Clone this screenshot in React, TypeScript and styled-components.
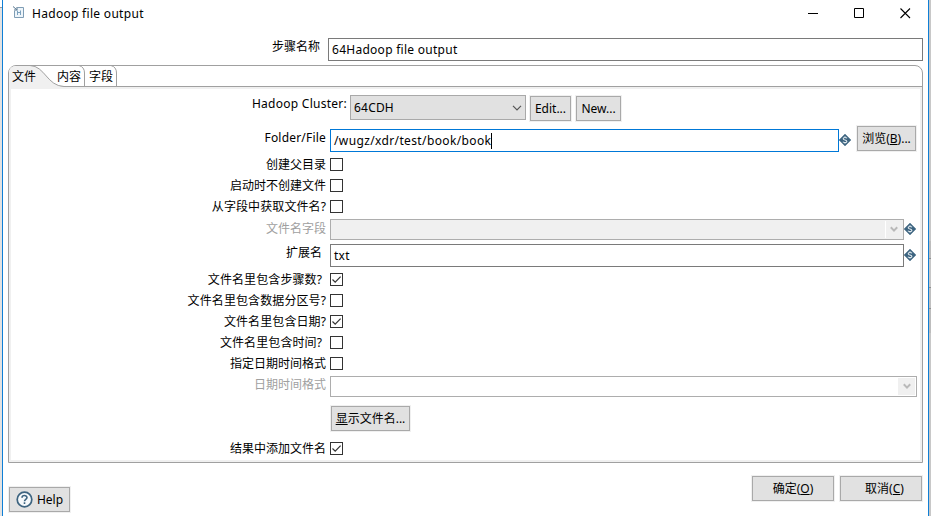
import React from "react";
import styled, { createGlobalStyle, css } from "styled-components";

const GlobalStyle = createGlobalStyle`
  * { box-sizing: border-box; }
  html, body { margin: 0; padding: 0; overflow: hidden; background: #fff; }
  body { font: 12px/16px "Noto Sans", "Noto Sans CJK SC", sans-serif; color: #000; }
`;

const Desktop = styled.div`
  display: flex;
  width: 931px;
  height: 516px;
`;

const LeftEdge = styled.div`
  width: 2px;
  background: linear-gradient(#fff 7px, #9a9a9a 7px, #9a9a9a 8px, #e2e2e2 8px);
`;

const RightEdge = styled.div`
  width: 2px;
  background: linear-gradient(
    #c8c8c8 241px, #bdbdbd 241px, #bdbdbd 258px, #8f8f8f 258px, #8f8f8f 259px,
    #c8c8c8 259px, #c8c8c8 287px, #8f8f8f 287px, #8f8f8f 288px,
    #c0c0c0 288px, #c0c0c0 308px, #8f8f8f 308px, #8f8f8f 309px,
    #bdbdbd 309px, #bdbdbd 333px, #c8c8c8 333px
  );
`;

const Window = styled.main`
  flex: 1;
  display: flex;
  flex-direction: column;
  border: solid #0f7fd6;
  border-width: 0 1px;
  background: #fff;
`;

const TitleBar = styled.header`
  display: flex;
  align-items: center;
  height: 38px;
  padding: 0 17px 12px 10px;
`;

const Title = styled.h1`
  flex: 1;
  margin: 2px 0 0 5px;
  font-size: 12px;
  font-weight: 400;
  letter-spacing: 0.3px;
`;

const Controls = styled.div`
  display: flex;
  gap: 35px;
`;

const StepRow = styled.div`
  display: flex;
  gap: 8px;
  height: 23px;
  padding-right: 5px;
`;

const StepLabel = styled.label`
  width: 317px;
  padding-top: 1px;
  text-align: right;
`;

const Field = styled.div<{ $w?: number; $mt?: number; $focus?: boolean }>`
  display: flex;
  align-items: center;
  height: 23px;
  ${(p) => (p.$w ? css`width: ${p.$w}px;` : css`flex: 1;`)}
  margin-top: ${(p) => p.$mt || 0}px;
  padding: 1px 0 0 3px;
  border: 1px solid ${(p) => (p.$focus ? "#0078d7" : "#7a7a7a")};
  background: #fff;
  letter-spacing: ${(p) => (p.$focus ? 0.37 : 0.27)}px;
  white-space: pre;
`;

const Caret = styled.span`
  width: 1px;
  height: 16px;
  background: #000;
`;

const Folder = styled.section`
  display: flex;
  flex-direction: column;
  height: 398px;
  margin: 4px 5px 0;
  border: 1px solid #a0a0a0;
  border-radius: 8px 8px 0 0;
`;

const TabBar = styled.nav`
  position: relative;
  display: flex;
  height: 21px;
  border-bottom: 1px solid #a0a0a0;
`;

const TabShape = styled.svg`
  position: absolute;
  left: -1px;
  top: -1px;
`;

const Tab = styled.span<{ $w: number }>`
  position: relative;
  width: ${(p) => p.$w}px;
  padding: 3px 0 0 3px;
`;

const Panel = styled.div`
  flex: 1;
  border: 2px solid #f0f0f0;
`;

const Row = styled.div<{ $h: number }>`
  display: flex;
  align-items: flex-start;
  height: ${(p) => p.$h}px;
`;

const Label = styled.label<{ $top: number; $inset?: number; $wide?: boolean; $off?: boolean; $track?: number }>`
  width: ${(p) => (p.$wide ? 339 : 319)}px;
  margin-top: ${(p) => p.$top}px;
  padding-right: ${(p) => 4 + (p.$inset || 0)}px;
  text-align: right;
  letter-spacing: ${(p) => p.$track || 0}px;
  white-space: nowrap;
  color: ${(p) => (p.$off ? "#a0a0a0" : "#000")};
`;

const Combo = styled.div`
  display: flex;
  align-items: center;
  justify-content: space-between;
  width: 176px;
  height: 25px;
  margin-top: 6px;
  padding: 0 3px;
  border: 1px solid #a9a9a9;
  background: #e1e1e1;
  letter-spacing: 0.2px;
`;

const DisabledCombo = styled.div<{ $w: number; $mt: number; $fill: string }>`
  display: flex;
  justify-content: flex-end;
  width: ${(p) => p.$w}px;
  height: 21px;
  margin-top: ${(p) => p.$mt}px;
  padding: 1px;
  border: 1px solid #adadad;
  background: ${(p) => p.$fill};
`;

const DropArrow = styled.span<{ $line: string }>`
  display: flex;
  align-items: center;
  justify-content: center;
  width: 17px;
  border-left: 1px solid ${(p) => p.$line};
  background: #f0f0f0;
`;

const Button = styled.button<{ $w: number; $mt?: number; $ml?: number; $indent?: number }>`
  display: flex;
  align-items: center;
  justify-content: center;
  gap: 4px;
  width: ${(p) => p.$w}px;
  height: 25px;
  margin: ${(p) => p.$mt || 0}px 0 0 ${(p) => p.$ml || 0}px;
  padding: 0 0 0 ${(p) => p.$indent || 0}px;
  border: 1px solid #a9a9a9;
  box-shadow: 0 0 0 1px #f0f0f0;
  background: #e1e1e1;
  color: #000;
  font: inherit;
  white-space: nowrap;
`;

const Box = styled.span`
  display: flex;
  width: 13px;
  height: 13px;
  margin-top: 3px;
  border: 1px solid #333;
  background: #fff;
`;

const VarSlot = styled.span<{ $mt: number }>`
  display: flex;
  margin-top: ${(p) => p.$mt}px;
`;

const Footer = styled.footer`
  display: flex;
  align-items: flex-start;
  padding: 13px 6px 0;
`;

const Spacer = styled.span`
  flex: 1;
`;

const VariableIcon = ({ top }: { top: number }) => (
  <VarSlot $mt={top}>
    <svg width="13" height="13" viewBox="0 0 13 13">
      <path d="M6 0 12 6 6 12 0 6Z" fill="#3d6480" stroke="#3d6480" strokeWidth=".4" />
      <path d="M8 4.300C7.600 3.700 6.900 3.500 6 3.500 4.900 3.500 4.200 4 4.200 4.700 4.200 6.400 7.900 5.600 7.900 7.400 7.900 8.200 7.100 8.600 6 8.600 5 8.600 4.300 8.300 3.900 7.700M6 2.300V3.500M6 8.600V9.800" fill="none" stroke="#e0e9ee" strokeWidth="1.100" />
    </svg>
  </VarSlot>
);

const Chevron = () => (
  <svg width="10" height="6" viewBox="0 0 10 6">
    <path d="M1 .8 5 4.8 9 .8" fill="none" stroke="#555" strokeWidth="1.2" />
  </svg>
);

const OffArrow = ({ line }: { line: string }) => (
  <DropArrow $line={line}>
    <svg width="8" height="7" viewBox="0 0 8 7">
      <path d="M.8 1.2 4 4.6 7.2 1.2" fill="none" stroke="#b9b9b9" strokeWidth="2" />
    </svg>
  </DropArrow>
);

const CheckBox = ({ checked }: { checked?: boolean }) => (
  <Box>
    {checked && (
      <svg width="11" height="11" viewBox="0 0 11 11">
        <path d="M1.5 5.5 4.2 8.2 9.6 2.7" fill="none" stroke="#333" strokeWidth="1.2" />
      </svg>
    )}
  </Box>
);

const CheckRow = ({ text, checked, inset, h = 21 }: { text: string; checked?: boolean; inset?: number; h?: number }) => (
  <Row $h={h}>
    <Label $top={2} $inset={inset} $track={text.endsWith("?") ? 0.1 : 0}>{text}</Label>
    <CheckBox checked={checked} />
  </Row>
);

export default function App() {
  return (
    <>
      <GlobalStyle />
      <Desktop>
        <LeftEdge />
        <Window>
          <TitleBar>
            <svg width="14" height="14" viewBox="0 0 14 14">
              <path d="M4.5 1.5H10.5V11.5H1.5V5" fill="#eef5fa" stroke="#7f9db5" />
              <path d="M0 .5 3.5 3.5M4 1V4H1" fill="none" stroke="#55758e" />
              <path d="M4.500 4.500V9M7.500 4.500V9M4.500 6.500H7.500" fill="none" stroke="#7ba0bd" />
            </svg>
            <Title>Hadoop file output</Title>
            <Controls>
              <svg width="11" height="11" viewBox="0 0 11 11"><path d="M0 5.5H10" stroke="#000" /></svg>
              <svg width="11" height="11" viewBox="0 0 11 11"><path d="M.5 .5H9.5V9.5H.5Z" fill="none" stroke="#000" /></svg>
              <svg width="11" height="11" viewBox="0 0 11 11"><path d="M.5 .5 10 10M10 .5 .5 10" stroke="#000" strokeWidth="1.1" /></svg>
            </Controls>
          </TitleBar>
          <StepRow>
            <StepLabel>步骤名称</StepLabel>
            <Field>64Hadoop file output</Field>
          </StepRow>
          <Folder>
            <TabBar>
              <TabShape width="115" height="22" viewBox="0 0 115 22">
                <path d="M1 22V8Q1 1 8 1H22C37 1 39 21 56 21.5V22Z" fill="#f0f0f0" />
                <path d="M22 .5C37 1 39 21 56 21.5M71 .5Q76.500 2 76.500 8V21M103 .5Q108.500 2 108.500 8V21" fill="none" stroke="#a0a0a0" />
              </TabShape>
              <Tab $w={45}>文件</Tab>
              <Tab $w={32}>内容</Tab>
              <Tab $w={32}>字段</Tab>
            </TabBar>
            <Panel>
              <Row $h={34}>
                <Label $wide $top={7} $inset={-1} $track={0.26}>Hadoop Cluster:</Label>
                <Combo>64CDH<Chevron /></Combo>
                <Button $w={41} $mt={7} $ml={4}>Edit...</Button>
                <Button $w={45} $mt={7} $ml={5}>New...</Button>
              </Row>
              <Row $h={32}>
                <Label $top={7} $track={0.2}>Folder/File</Label>
                <Field $w={509} $mt={6} $focus>/wugz/xdr/test/book/book<Caret /></Field>
                <VariableIcon top={11} />
                <Button $w={59} $mt={3} $ml={5}>
                  <span>浏览(<u>B</u>)...</span>
                </Button>
              </Row>
              <CheckRow text="创建父目录" />
              <CheckRow text="启动时不创建文件" />
              <CheckRow text="从字段中获取文件名?" h={20} />
              <Row $h={25}>
                <Label $top={4} $off>文件名字段</Label>
                <DisabledCombo $w={574} $mt={2} $fill="#f0f0f0"><OffArrow line="#fff" /></DisabledCombo>
                <VariableIcon top={6} />
              </Row>
              <Row $h={28}>
                <Label $top={3} $inset={4}>扩展名</Label>
                <Field $w={574} $mt={2}>txt</Field>
                <VariableIcon top={7} />
              </Row>
              <CheckRow text="文件名里包含步骤数?" inset={4} checked />
              <CheckRow text="文件名里包含数据分区号?" />
              <CheckRow text="文件名里包含日期?" checked />
              <CheckRow text="文件名里包含时间?" inset={4} />
              <CheckRow text="指定日期时间格式" />
              <Row $h={31}>
                <Label $top={2} $off>日期时间格式</Label>
                <DisabledCombo $w={587} $mt={1} $fill="#fff"><OffArrow line="#f0f0f0" /></DisabledCombo>
              </Row>
              <Row $h={33}>
                <Button $w={79} $ml={320}>
                  <span><u>显</u>示文件名...</span>
                </Button>
              </Row>
              <CheckRow text="结果中添加文件名" checked />
            </Panel>
          </Folder>
          <Footer>
            <Button $w={61} $mt={11}>
              <svg width="17" height="17" viewBox="0 0 17 17">
                <circle cx="8.500" cy="8.500" r="7.300" fill="#f6f9fb" stroke="#3d6480" strokeWidth="1.700" />
                <path d="M6 6.700C6 3.800 11 3.800 11 6.600 11 8.400 8.500 8.300 8.500 10.200M8.500 11.300V13" fill="none" stroke="#3d6480" strokeWidth="1.600" />
              </svg>
              Help
            </Button>
            <Spacer />
            <Button $w={82}><span>确定(<u>O</u>)</span></Button>
            <Button $w={82} $ml={6} $indent={7}><span>取消(<u>C</u>)</span></Button>
          </Footer>
        </Window>
        <RightEdge />
      </Desktop>
    </>
  );
}
